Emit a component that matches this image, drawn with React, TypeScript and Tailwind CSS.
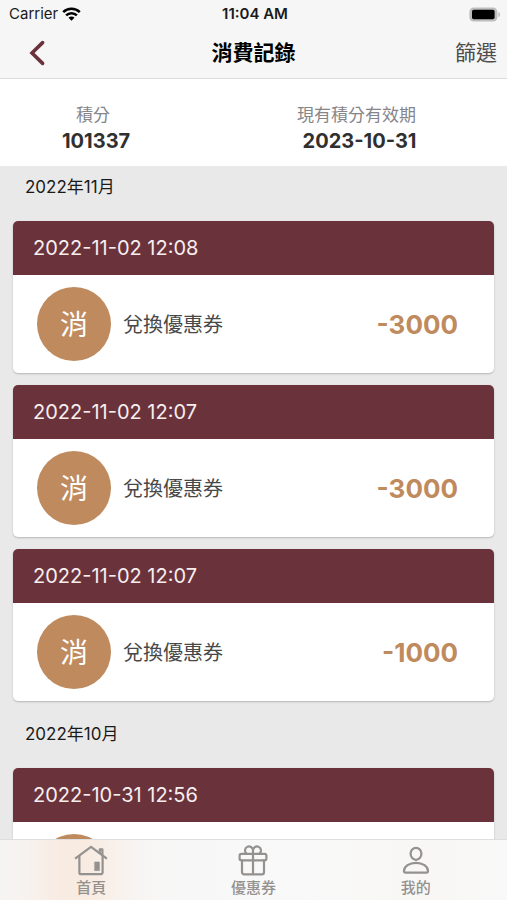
import type { ReactNode } from "react";

type Entry = { id: number; time: string; amount: string };
type Month = { title: string; entries: Entry[] };

const months: Month[] = [
  {
    title: "2022年11月",
    entries: [
      { id: 1, time: "2022-11-02 12:08", amount: "-3000" },
      { id: 2, time: "2022-11-02 12:07", amount: "-3000" },
      { id: 3, time: "2022-11-02 12:07", amount: "-1000" },
    ],
  },
  {
    title: "2022年10月",
    entries: [{ id: 4, time: "2022-10-31 12:56", amount: "-1000" }],
  },
];

function StatusBar() {
  return (
    <div className="grid grid-cols-3 items-center h-7 pl-[9px] pr-[6px] text-[#1a1a1a]">
      <div className="flex items-center gap-1">
        <span className="text-[15px]">Carrier</span>
        <svg className="w-[19px] h-[14px]" viewBox="0 0 19 14" fill="none" stroke="#000" strokeWidth="2.5">
          <path d="M1.2 5.2a11.8 11.8 0 0 1 16.6 0" />
          <path d="M4.1 8.4a7.7 7.7 0 0 1 10.8 0" />
          <path d="M9.5 13.8 6.5 10.8a4.2 4.2 0 0 1 6 0z" fill="#000" stroke="none" />
        </svg>
      </div>
      <span className="text-center font-semibold text-[15px]">11:04 AM</span>
      <svg className="justify-self-end w-[32px] h-[15px]" viewBox="0 0 32 15">
        <rect x="0.4" y="0.4" width="28" height="14.2" rx="4.4" fill="#bdbdbd" />
        <rect x="3" y="2.8" width="22.6" height="9.4" rx="1.8" fill="#000" />
        <path d="M29.4 5c2.200 .8 2.200 4.400 0 5.200z" fill="#bdbdbd" />
      </svg>
    </div>
  );
}

function NavBar() {
  return (
    <div className="grid grid-cols-3 items-center h-[51px] px-[10px] pb-px border-b border-[#dcdcdc]">
      <button type="button" aria-label="返回" className="justify-self-start pl-[18px]">
        <svg className="w-[18px] h-[26px]" viewBox="0 0 18 26" fill="none" stroke="#6a333c" strokeWidth="3.6" strokeLinecap="round">
          <path d="M14.6 2.6 4 13l10.6 10.4" />
        </svg>
      </button>
      <h1 className="text-center text-[21px] font-bold text-black">消費記錄</h1>
      <button type="button" className="justify-self-end text-[21px] text-[#4d4d4d]">
        篩選
      </button>
    </div>
  );
}

function Summary() {
  return (
    <div className="flex justify-between bg-white pt-[23px] pb-3 pl-[62px] pr-[85px] text-center">
      <div>
        <p className="pr-[6px] text-[17px] leading-[26px] text-[#85858a]">積分</p>
        <p className="text-xl leading-[26px] font-bold text-[#303030]">101337</p>
      </div>
      <div>
        <p className="pr-[6px] text-[17px] leading-[26px] text-[#85858a]">現有積分有效期</p>
        <p className="text-xl leading-[26px] font-bold text-[#303030]">2023-10-31</p>
      </div>
    </div>
  );
}

function Card({ entry }: { entry: Entry }) {
  return (
    <li className="mb-3 rounded-[5px] overflow-hidden bg-white shadow-[0_1px_2px_rgba(0,0,0,0.22)]">
      <div className="bg-[#6a333c] h-[54px] px-5 flex items-center text-xl text-[#f7eeee]">
        {entry.time}
      </div>
      <div className="flex items-center h-[98px] pl-6 pr-9">
        <div className="size-[74px] pt-[2px] shrink-0 rounded-full bg-[#bf8b5e] flex items-center justify-center text-[28px] text-white">
          消
        </div>
        <p className="pl-3 pt-[2px] text-xl text-[#484848]">兌換優惠券</p>
        <p className="ml-auto text-[26px] font-bold text-[#bf8b5e]">{entry.amount}</p>
      </div>
    </li>
  );
}

function Tab({ label, children }: { label: string; children: ReactNode }) {
  return (
    <a href="#" className="flex flex-1 flex-col items-center pt-1 text-[#94918f]">
      <svg className="size-[34px]" viewBox="0 0 34 34" fill="none" stroke="currentColor" strokeWidth="2.2" strokeLinecap="round" strokeLinejoin="round">
        {children}
      </svg>
      <span className="text-[15px] leading-5 font-medium">{label}</span>
    </a>
  );
}

function TabBar() {
  return (
    <nav className="flex h-[61px] px-[10px] border-t border-[#dedede] bg-[linear-gradient(90deg,#f6f5f4_0%,#f7f2ef_5%,#f8ebe2_12%,#f8ebe1_17%,#f8f1ec_23%,#f7f6f5_29%,#f7f7f7_36%,#f9f9f9_60%,#f8f7f5_85%,#f9f9f9_100%)]">
      <Tab label="首頁">
        <path d="M1.8 14.2 17 2.8l15.2 11.4" />
        <path d="M5.4 12.200v16.200a1.800 1.800 0 0 0 1.800 1.800h19.600a1.800 1.800 0 0 0 1.800-1.800V12.200" />
        <path d="M25.800 8.600V5.400h2.600v5.400" />
        <path d="M20.800 18h4.600v8.600h-4.600z" fill="currentColor" strokeWidth="0.6" />
      </Tab>
      <Tab label="優惠券">
        <rect x="3.6" y="9.8" width="26.8" height="6.6" rx="1.8" />
        <path d="M6 16.4v11.8a2.2 2.2 0 0 0 2.2 2.2h17.600a2.2 2.2 0 0 0 2.2-2.2V16.4M17 10v20" />
        <path d="M17 9.8V6.200a4 4 0 1 0-6.400 3.400M17 9.800V6.200a4 4 0 1 1 6.400 3.400" />
      </Tab>
      <Tab label="我的">
        <ellipse cx="17" cy="9.8" rx="5.4" ry="6" />
        <path d="M5 27c0-4.600 5.400-8.200 12-8.200S29 22.400 29 27c0 1-.6 1.600-1.600 1.600H6.600C5.600 28.600 5 28 5 27z" />
      </Tab>
    </nav>
  );
}

export default function App() {
  return (
    <div className="flex flex-col h-screen overflow-hidden bg-[#e9e9e9] font-['Inter','Noto_Sans_CJK_TC',sans-serif]">
      <header className="shrink-0 bg-[#f6f6f6]">
        <StatusBar />
        <NavBar />
        <Summary />
      </header>
      <main className="flex-1 min-h-0 overflow-y-auto [scrollbar-width:none] px-[13px]">
        {months.map((month) => (
          <section key={month.title}>
            <h2 className="pt-2 pb-[21px] pl-3 text-[17px] leading-[26px] text-[#1a1a1a]">{month.title}</h2>
            <ul>
              {month.entries.map((entry) => (
                <Card key={entry.id} entry={entry} />
              ))}
            </ul>
          </section>
        ))}
      </main>
      <TabBar />
    </div>
  );
}
